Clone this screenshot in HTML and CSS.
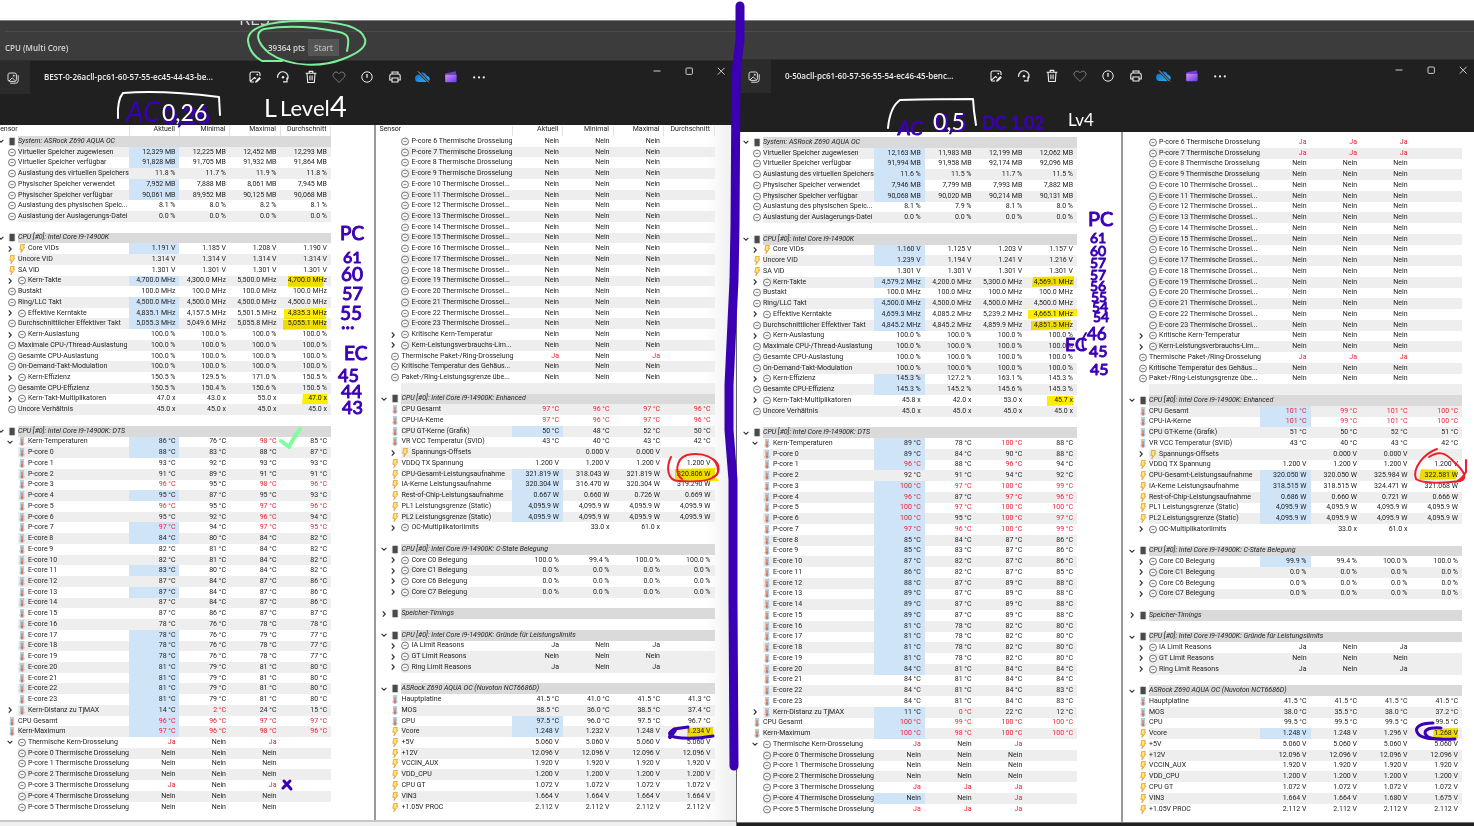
FILE: index.html
```html
<!DOCTYPE html>
<html lang="de">
<head>
<meta charset="utf-8">
<title>Sensorvergleich</title>
<link rel="stylesheet" href="styles.css">
</head>
<body>
<svg class="defs" aria-hidden="true">
  <defs>
    <linearGradient id="clipFill" x1="0" y1="0" x2="1" y2="1"><stop offset="0" stop-color="#e08cf5"/><stop offset="1" stop-color="#5a3df0"/></linearGradient>
    <linearGradient id="cloudFill" x1="0" y1="0" x2="1" y2="1"><stop offset="0" stop-color="#0a66c8"/><stop offset="1" stop-color="#2fb4f5"/></linearGradient>
  </defs>
  <symbol id="i-clock" viewBox="0 0 8 8"><circle cx="4" cy="4" r="3.5" fill="#f4f4f4" stroke="#5a5a5a" stroke-width=".8"/><path d="M2.6 4h2.8" stroke="#777" stroke-width=".8"/></symbol>
  <symbol id="i-bolt" viewBox="0 0 8 10"><path d="M2.6.4h4L5.8 3.6h1.3L2.8 9.7l.7-3.8H1.6z" fill="#ffe96b" stroke="#e08a2c" stroke-width=".8"/></symbol>
  <symbol id="i-temp" viewBox="0 0 8 10"><path d="M2.2.3h3.6v5.4a2.4 2.4 0 1 1-3.6 0z" fill="#b9dcec" stroke="#86b4cc" stroke-width=".6"/><path d="M4 2v5" stroke="#e8663a" stroke-width="1.3"/><circle cx="4" cy="7.4" r="1.3" fill="#e8663a"/></symbol>
  <symbol id="i-chip" viewBox="0 0 8 10"><rect x="1.2" y=".8" width="5.8" height="8.4" fill="#4a4a4a"/><path d="M.9 1.5v7M7.3 1.5v7" stroke="#999" stroke-width=".6" stroke-dasharray="1 1"/></symbol>
  <symbol id="i-open" viewBox="0 0 8 8"><path d="M1.6 2.8 4 5.2l2.4-2.4" fill="none" stroke="#333" stroke-width="1.1"/></symbol>
  <symbol id="i-closed" viewBox="0 0 8 8"><path d="M2.8 1.4 5.2 4 2.8 6.6" fill="none" stroke="#333" stroke-width="1.2"/></symbol>
  <symbol id="i-photo" viewBox="0 0 16 16"><rect x="3" y="3" width="8.4" height="8.4" rx="1.8" fill="none" stroke="#ddd"/><path d="M5.2 13.2h5.5a2.5 2.5 0 0 0 2.5-2.5V5.2M4 11l3.2-3.2L10.6 11" fill="none" stroke="#ddd"/><circle cx="8.8" cy="5.7" r=".9" fill="#ddd"/></symbol>
  <symbol id="i-edit" viewBox="0 0 16 16"><path d="M13 7V5a2 2 0 0 0-2-2H5a2 2 0 0 0-2 2v6a2 2 0 0 0 2 2h2M3.6 12.2 7.5 8.5l1.5 1.2" fill="none" stroke="#eee" stroke-width="1.1"/><path d="m8.5 12 3.8-4 1.6 1.6-3.8 3.7-2 .5z" fill="#eee"/><circle cx="10.3" cy="5.6" r=".9" fill="#eee"/></symbol>
  <symbol id="i-rotate" viewBox="0 0 16 16"><path d="M2.6 8.8A5.3 5.3 0 1 1 11.8 11.6M12 8.6v4.2H8" fill="none" stroke="#eee" stroke-width="1.2"/><circle cx="8" cy="8.3" r="1.2" fill="#eee"/></symbol>
  <symbol id="i-trash" viewBox="0 0 16 16"><path d="M2.6 4.3h10.8M6.2 4V2.4h3.6V4M4 4.5l.7 9h6.6l.7-9M6.9 6.5v4.8M9.1 6.5v4.8" fill="none" stroke="#eee" stroke-width="1.1"/></symbol>
  <symbol id="i-heart" viewBox="0 0 16 16"><path d="M8 13.4 2.9 8.4a3.1 3.1 0 0 1 0-4.4 3.1 3.1 0 0 1 4.4 0l.7.8.7-.8a3.1 3.1 0 0 1 4.4 0 3.1 3.1 0 0 1 0 4.4z" fill="none" stroke="#777"/></symbol>
  <symbol id="i-info" viewBox="0 0 16 16"><circle cx="8" cy="8" r="5.2" fill="none" stroke="#eee"/><path d="M8 5v3.8" stroke="#eee" stroke-width="1.3"/></symbol>
  <symbol id="i-print" viewBox="0 0 16 16"><path d="M5 5V3h6v2M5 11H2.8V7a2 2 0 0 1 2-2h6.4a2 2 0 0 1 2 2v4H11M5 9h6v4H5z" fill="none" stroke="#eee" stroke-width="1.1"/></symbol>
  <symbol id="i-cloud" viewBox="0 0 16 16"><path d="M4 13A3.6 3.6 0 0 1 3.4 5.8a4.5 4.5 0 0 1 8.3 1A3.2 3.2 0 0 1 12.6 13z" fill="url(#cloudFill)"/><path d="m3 2.4 10.8 11" stroke="#202020" stroke-width="2.4"/><path d="m3 2.4 10.8 11" stroke="#aaa"/></symbol>
  <symbol id="i-clip" viewBox="0 0 16 16"><path d="M2.2 4.4 13 2.2v3.1H2.2z" fill="#6c3ce0"/><path d="M2.2 5.6h11.4v6.6a1 1 0 0 1-1 1H3.2a1 1 0 0 1-1-1z" fill="url(#clipFill)"/></symbol>
  <symbol id="i-more" viewBox="0 0 16 16"><circle cx="3.2" cy="8.4" r="1.1" fill="#eee"/><circle cx="8" cy="8.4" r="1.1" fill="#eee"/><circle cx="12.8" cy="8.4" r="1.1" fill="#eee"/></symbol>
  <symbol id="i-min" viewBox="0 0 16 16"><path d="M4.5 8h7" stroke="#ccc"/></symbol>
  <symbol id="i-max" viewBox="0 0 16 16"><rect x="5" y="5" width="6.4" height="6.4" rx="1" fill="none" stroke="#ccc"/></symbol>
  <symbol id="i-close" viewBox="0 0 16 16"><path d="m4.8 4.8 6.8 6.8M11.6 4.8 4.8 11.6" stroke="#ccc"/></symbol>
</svg>

<header class="bench">
  <h1 class="bench-title">RES</h1>
  <div class="bench-row">
    <span class="bench-name">CPU (Multi Core)</span>
    <span class="bench-score">39364 pts</span>
    <button class="bench-start" type="button">Start</button>
  </div>
</header>

<main class="workspace">
  <section class="window window-a">
    <div class="titlebar" data-title="BEST-0-26acll-pc61-60-57-55-ec45-44-43-be..."></div>
    <div class="panes">
      <div class="pane" data-table="a1" data-head="Sensor"></div>
      <div class="pane pane-split" data-table="a2" data-head="Sensor"></div>
    </div>
    <div class="window-foot"></div>
  </section>
  <section class="window window-b">
    <div class="titlebar" data-title="0-50acll-pc61-60-57-56-55-54-ec46-45-benc..."></div>
    <div class="panes">
      <div class="pane" data-table="b1"></div>
      <div class="pane pane-split" data-table="b2"></div>
    </div>
    <div class="window-foot"></div>
  </section>
</main>

<svg class="ink ink-marker" viewBox="0 0 1474 826" aria-hidden="true">
  <path d="M288 276h36v3l-1 8h-35z M284 309l42-1v11h-42z M283 320h42l2 9-44 1z M303 394h24l1 10h-26z M675 469l40-1v8l4 5-40 1-4-3z M687 728l26-1v9l-26 1z M1033 277l41-1v9l-42 2z M1028 310l49-1v7l-49 3z M1031 321l40-1-1 9-39 1z M1047 396h26l1 9-27 1z M1421 469l36 1-1 9-37 1z M1434 729l24-1v10l-25 1z"/>
</svg>
<svg class="ink" viewBox="0 0 1474 826">
  <g class="pen-purple">
    <path class="divider-top" d="M740 6 740 40 737 64 736 80 735 225 734 280 729 385 729 430 733 480 733 600 734 766"/>
    <path d="M283 788q3-3 7-7M284 781l7 8" stroke-width="3"/>
    <path d="M713 736q-22 4-39 1c-6-3-6-4 0-8l14-2" stroke-width="3"/>
    <path d="M675 730l-5 7" stroke-width="4"/>
    <path d="M1433 723c-14 0-18 5-16 9 2 5 8 8 38 7M1441 728c-14-1-18 3-15 7 2 3 8 4 16 4" stroke-width="3"/>
    <path d="M1086 333q-6 8-2 17" stroke-width="2"/>
  </g>
  <path class="pen-green" d="M347 51c3-14 1-17-8-19-24-5-50-7-75-3-9 3-8 13 5 24 22 15 54 14 74 6 16-6 24-13 22-20-4-14-32-18-62-18-36 0-56 7-55 20 1 7 5 15 14 20h20"/>
  <path class="check" d="M281 441l8 6q4-9 11-18"/>
  <g class="pen-white">
    <path d="M118 118q-1-18 5-25 40-3 96 4l1 18"/>
    <path d="M888 128q2-21 12-28 40-1 73-1l1 12 2 14"/>
  </g>
  <g class="pen-red">
    <path d="M671 457c-5 10-4 24 8 24 16 1 38 1 39-10 0-14-15-19-31-16-12 4-12 20-5 24M713 459c8 5 7 16 0 18"/>
    <path d="M1437 449c-14 5-25 20-21 30 6 5 30 4 44 2 10-3 1-13-7-20-8-9-15-10-24-4M1466 460v12q-4 7-10 10"/>
  </g>
  <g class="note-purple">
    <text x="126" y="122" font-size="28" class="slant thin">AC</text>
    <text x="163" y="124" font-size="24">0,26</text>
    <text x="340" y="240" font-size="19">PC</text>
    <text x="343" y="263" font-size="16">61</text>
    <text x="341" y="281" font-size="19">60</text>
    <text x="342" y="300" font-size="18">57</text>
    <text x="340" y="320" font-size="19">55</text>
    <text x="341" y="329" font-size="19">...</text>
    <text x="344" y="360" font-size="19">EC</text>
    <text x="338" y="382" font-size="18">45</text>
    <text x="341" y="398" font-size="18">44</text>
    <text x="342" y="414" font-size="18">43</text>
    <text x="898" y="135" font-size="20" class="slant">AC</text>
    <text x="935" y="131" font-size="23">0,5</text>
    <text x="982" y="129" font-size="17">DC 1,02</text>
    <text x="1088" y="226" font-size="20">PC</text>
    <text x="1090" y="243" font-size="14">61</text>
    <text x="1090" y="256" font-size="14">60</text>
    <text x="1090" y="268" font-size="14">57</text>
    <text x="1090" y="280" font-size="14">57</text>
    <text x="1090" y="291" font-size="14">56</text>
    <text x="1091" y="302" font-size="14">55</text>
    <text x="1092" y="312" font-size="14">54</text>
    <text x="1093" y="322" font-size="14">54</text>
    <text x="1087" y="340" font-size="17">46</text>
    <text x="1089" y="357" font-size="16">45</text>
    <text x="1090" y="375" font-size="16">45</text>
    <text x="1065" y="351" font-size="18">EC</text>
  </g>
  <g class="note-white">
    <text x="162" y="121" font-size="23">0,26</text>
    <text x="264" y="117" font-size="25">L</text>
    <text x="280" y="116" font-size="22">Level</text>
    <text x="330" y="117" font-size="29">4</text>
    <text x="933" y="130" font-size="23">0,5</text>
    <text x="1068" y="126" font-size="17">Lv4</text>
  </g>
</svg>
<script src="sensors.js"></script>
</body>
</html>
```

FILE: styles.css
```css
* { box-sizing: border-box; }

body {
  margin: 0;
  height: 100vh;
  display: flex;
  flex-direction: column;
  overflow: hidden;
  background: #fff;
  color: #1c1c1c;
  font-family: Roboto, "Liberation Sans", Arial, sans-serif;
  position: relative;
}

.defs { position: absolute; width: 0; height: 0; }

button {
  border: 0;
  padding: 0;
  background: none;
  color: inherit;
  font: inherit;
}

/* benchmark strip */
.bench {
  margin-top: 20px;
  height: 40px;
  flex: none;
  overflow: hidden;
  background: #3c3c3c;
  border-top: 1px solid #7d827d;
  color: #d6d6d6;
  font-family: "Open Sans", "Noto Sans", sans-serif;
}
.bench-title {
  margin: -3px 0 0 239px;
  height: 13px;
  line-height: 0;
  font-size: 18px;
  font-weight: 400;
}
.bench-row {
  display: flex;
  align-items: center;
  margin-left: 5px;
  padding: 7px 0 4px;
  border-top: 1px solid #4b4b4b;
  font-size: 8px;
  font-weight: 600;
}
.bench-name { width: 263px; }
.bench-score { width: 40px; }
.bench-start {
  width: 31px;
  height: 17px;
  background: #555;
  color: #b8b8b8;
}

/* viewer windows */
.workspace {
  flex: 1;
  min-height: 0;
  display: grid;
  grid-template-columns: 1fr 1fr;
}
.window {
  display: flex;
  flex-direction: column;
  min-width: 0;
  min-height: 0;
  background: #202020;
}
.window-a { border-right: 1px solid #666; }
.window-b { margin-top: -1px; }

.titlebar {
  height: 65px;
  flex: none;
  display: flex;
  align-items: flex-start;
  padding-right: 4px;
  border-top: 1px solid #2e2e2e;
  color: #eee;
  font-family: "Open Sans", "Noto Sans", sans-serif;
}
.window-b .titlebar {
  height: 73px;
  padding: 0 0 0 4px;
}
.tab {
  width: 30px;
  height: 33px;
  padding: 8px 5px;
  background: #2b2b2b;
}
.tab svg, .tool svg, .winbtn svg { display: block; width: 16px; height: 16px; }
.file {
  width: 217px;
  padding-left: 14px;
  line-height: 32px;
  font-size: 8px;
  font-weight: 600;
  white-space: nowrap;
}
.tools { display: flex; gap: 12px; padding-top: 8px; }
.tool { width: 16px; height: 16px; }
.winbtns { display: flex; gap: 10px; margin-left: auto; padding-top: 2px; }
.winbtn { width: 22px; height: 16px; padding: 0 3px; }

.panes {
  flex: 1;
  min-height: 0;
  display: grid;
  grid-template-columns: 375fr 362fr;
  overflow: hidden;
  background: #fff;
}
.window-b .panes { grid-template-columns: 384fr 353fr; }
.pane { min-height: 0; padding: 1px 43px 7px 0; }
.window-a .pane:first-child { margin-left: -4px; }
.pane-split { border-left: 2px solid #9a9a9a; }
.window-a .pane-split {
  padding: 1px 21px 7px 3px;
  background: linear-gradient(to left, #eee, #fff 30px);
}
.window-b .pane { padding: 5px 44px 7px 4px; }
.window-b .pane-split { padding: 5px 12px 7px 4px; }

.window-foot { height: 6px; flex: none; background: #f0f0f0; border-top: 2px solid #c6c6c6; }
.window-b .window-foot { height: 4px; background: #202020; border-top: 1px solid #777; }

/* sensor tables */
.sensors {
  width: 100%;
  height: 100%;
  table-layout: fixed;
  border-collapse: collapse;
  font-size: 7px;
  line-height: 9px;
  white-space: nowrap;
}
.c-tree { width: 22px; }
.c-name { width: 111px; }
.sensors tr { height: 10px; }
.sensors td, .sensors th { padding: 0 4px 0 0; text-align: right; font-weight: 400; }
.sensors thead th { line-height: 6px; vertical-align: top; border-right: 1px solid #e2e2e2; }
.sensors thead .h-name { padding-left: 0; text-align: left; }
.sensors td.tree { padding: 0; text-align: left; }
.sensors .name { padding: 0; text-align: left; }
.cell { display: flex; align-items: center; height: 9px; }
.tree .cell { padding-left: 1px; }
.tree .cell.top { padding-left: 12px; }
.tree .cell.sub { padding-left: 10px; }
.ico { width: 8px; height: 9px; flex: none; }
.chev { width: 8px; height: 8px; flex: none; margin-right: 3px; }
.name .ico { margin: 0 2px 0 0; }
.stripe td:not(.tree) { background: #eee; }
.group td.name { background: #dadada; font-style: italic; }
.sensors td.hot { background: #d0e4f8; }
.sensors td.alert { color: #ee1c2e; }

/* drawn annotations over both windows */
.ink {
  position: absolute;
  inset: 0;
  width: 100%;
  height: 100%;
  pointer-events: none;
  fill: none;
  stroke-linecap: round;
  stroke-linejoin: round;
}
.ink-marker { mix-blend-mode: multiply; fill: #ffec00; }
.pen-purple { stroke: #3c00b4; }
.divider-top { stroke-width: 9px; }
.pen-green { stroke: #7df09a; stroke-width: 2px; }
.check { stroke: #7dff9d; stroke-width: 4px; }
.pen-white { stroke: #fff; stroke-width: 2px; }
.pen-red { stroke: #e8222c; stroke-width: 2px; }
.note-purple { fill: #3c00b4; stroke: #3c00b4; stroke-width: 1px; font-family: Lato, sans-serif; }
.note-white { fill: #fff; font-family: Lato, sans-serif; }
.slant { font-style: italic; }
.thin { stroke: none; }
```

FILE: sensors.js
```js
/* Row syntax: "<kind> <label>|current|min|max|avg"
   kind: G open group, g closed group (second char: 1 = first row striped)
         c clock, b bolt, t thermometer; then 0 top level, > closed, v open, . leaf
   value prefix: * changed, ! alert */
const drossel = (from, to, values) => {
  const out = [];
  for (let n = from; n <= to; n++) {
    const name = (n < 8 ? 'P' : 'E') + '-core ' + n + ' Thermische ' + (n < 10 ? 'Drosselung' : 'Drossel...');
    out.push('c. ' + name + '|' + ((values && values[n]) || 'Nein|Nein|Nein'));
  }
  return out;
};

const tables = {
  a1: [
    'G1 System: ASRock Z690 AQUA OC',
    'c0 Virtueller Speicher zugewiesen|*12,329 MB|12,225 MB|12,452 MB|12,293 MB',
    'c0 Virtueller Speicher verfügbar|*91,828 MB|91,705 MB|91,932 MB|91,864 MB',
    'c0 Auslastung des virtuellen Speichers|11.8 %|11.7 %|11.9 %|11.8 %',
    'c0 Physischer Speicher verwendet|*7,952 MB|7,888 MB|8,061 MB|7,945 MB',
    'c0 Physischer Speicher verfügbar|*90,061 MB|89,952 MB|90,125 MB|90,068 MB',
    'c0 Auslastung des physischen Speic...|8.1 %|8.0 %|8.2 %|8.1 %',
    'c0 Auslastung der Auslagerungs-Datei|0.0 %|0.0 %|0.0 %|0.0 %',
    '',
    'G0 CPU [#0]: Intel Core i9-14900K',
    'b> Core VIDs|*1.191 V|1.185 V|1.208 V|1.190 V',
    'b0 Uncore VID|1.314 V|1.314 V|1.314 V|1.314 V',
    'b0 SA VID|1.301 V|1.301 V|1.301 V|1.301 V',
    'c> Kern-Takte|*4,700.0 MHz|4,300.0 MHz|5,500.0 MHz|4,700.0 MHz',
    'c0 Bustakt|100.0 MHz|100.0 MHz|100.0 MHz|100.0 MHz',
    'c0 Ring/LLC Takt|*4,500.0 MHz|4,500.0 MHz|4,500.0 MHz|4,500.0 MHz',
    'c> Effektive Kerntakte|*4,835.1 MHz|4,157.5 MHz|5,501.5 MHz|4,835.3 MHz',
    'c0 Durchschnittlicher Effektiver Takt|*5,055.3 MHz|5,049.6 MHz|5,055.8 MHz|5,055.1 MHz',
    'c> Kern-Auslastung|100.0 %|100.0 %|100.0 %|100.0 %',
    'c0 Maximale CPU-/Thread-Auslastung|100.0 %|100.0 %|100.0 %|100.0 %',
    'c0 Gesamte CPU-Auslastung|100.0 %|100.0 %|100.0 %|100.0 %',
    'c0 On-Demand-Takt-Modulation|100.0 %|100.0 %|100.0 %|100.0 %',
    'c> Kern-Effizienz|150.5 %|129.5 %|171.0 %|150.5 %',
    'c0 Gesamte CPU-Effizienz|150.5 %|150.4 %|150.6 %|150.5 %',
    'c> Kern-Takt-Multiplikatoren|47.0 x|43.0 x|55.0 x|47.0 x',
    'c0 Uncore Verhältnis|45.0 x|45.0 x|45.0 x|45.0 x',
    '',
    'G0 CPU [#0]: Intel Core i9-14900K: DTS',
    'tv Kern-Temperaturen|*86 °C|76 °C|!98 °C|85 °C',
    't. P-core 0|*88 °C|83 °C|88 °C|87 °C',
    't. P-core 1|93 °C|92 °C|93 °C|93 °C',
    't. P-core 2|91 °C|89 °C|91 °C|91 °C',
    't. P-core 3|!96 °C|95 °C|!98 °C|!96 °C',
    't. P-core 4|*95 °C|87 °C|95 °C|93 °C',
    't. P-core 5|!96 °C|95 °C|!97 °C|!96 °C',
    't. P-core 6|95 °C|92 °C|!96 °C|94 °C',
    't. P-core 7|*!97 °C|94 °C|!97 °C|!95 °C',
    't. E-core 8|*84 °C|80 °C|84 °C|82 °C',
    't. E-core 9|82 °C|81 °C|84 °C|82 °C',
    't. E-core 10|82 °C|81 °C|84 °C|82 °C',
    't. E-core 11|*83 °C|80 °C|84 °C|82 °C',
    't. E-core 12|87 °C|84 °C|87 °C|86 °C',
    't. E-core 13|*87 °C|84 °C|87 °C|86 °C',
    't. E-core 14|87 °C|84 °C|87 °C|86 °C',
    't. E-core 15|87 °C|86 °C|87 °C|87 °C',
    't. E-core 16|78 °C|76 °C|78 °C|78 °C',
    't. E-core 17|*78 °C|76 °C|79 °C|77 °C',
    't. E-core 18|*78 °C|76 °C|78 °C|77 °C',
    't. E-core 19|*78 °C|76 °C|78 °C|77 °C',
    't. E-core 20|*81 °C|79 °C|81 °C|80 °C',
    't. E-core 21|*81 °C|79 °C|81 °C|80 °C',
    't. E-core 22|*81 °C|79 °C|81 °C|80 °C',
    't. E-core 23|*81 °C|79 °C|81 °C|80 °C',
    't> Kern-Distanz zu TjMAX|*14 °C|!2 °C|24 °C|15 °C',
    't0 CPU Gesamt|*!96 °C|!96 °C|!97 °C|!97 °C',
    't0 Kern-Maximum|*!97 °C|!96 °C|!98 °C|!96 °C',
    'cv Thermische Kern-Drosselung|!Ja|Nein|!Ja',
    ...drossel(0, 5, { 3: '!Ja|Nein|!Ja' })
  ],
  a2: [
    ...drossel(6, 23),
    'c> Kritische Kern-Temperatur|Nein|Nein|Nein',
    'c> Kern-Leistungsverbrauchs-Lim...|Nein|Nein|Nein',
    'c0 Thermische Paket-/Ring-Drosselung|!Ja|Nein|!Ja',
    'c0 Kritische Temperatur des Gehäus...|Nein|Nein|Nein',
    'c0 Paket-/Ring-Leistungsgrenze übe...|Nein|Nein|Nein',
    '#',
    'G1 CPU [#0]: Intel Core i9-14900K: Enhanced',
    't0 CPU Gesamt|!97 °C|!96 °C|!97 °C|!96 °C',
    't0 CPU-IA-Kerne|!97 °C|!96 °C|!97 °C|!96 °C',
    't0 CPU GT-Kerne (Grafik)|*50 °C|48 °C|52 °C|50 °C',
    't0 VR VCC Temperatur (SVID)|43 °C|40 °C|43 °C|42 °C',
    'b> Spannungs-Offsets||0.000 V|0.000 V|',
    'b0 VDDQ TX Spannung|1.200 V|1.200 V|1.200 V|1.200 V',
    'b0 CPU-Gesamt-Leistungsaufnahme|*321.819 W|318.043 W|321.819 W|320.806 W',
    'b0 IA-Kerne Leistungsaufnahme|*320.304 W|316.470 W|320.304 W|319.290 W',
    'b0 Rest-of-Chip-Leistungsaufnahme|*0.667 W|0.660 W|0.726 W|0.669 W',
    'b0 PL1 Leistungsgrenze (Static)|*4,095.9 W|4,095.9 W|4,095.9 W|4,095.9 W',
    'b0 PL2 Leistungsgrenze (Static)|*4,095.9 W|4,095.9 W|4,095.9 W|4,095.9 W',
    'c> OC-Multiplikatorlimits||33.0 x|61.0 x|',
    '',
    'G0 CPU [#0]: Intel Core i9-14900K: C-State Belegung',
    'c> Core C0 Belegung|100.0 %|99.4 %|100.0 %|100.0 %',
    'c> Core C1 Belegung|0.0 %|0.0 %|0.0 %|0.0 %',
    'c> Core C6 Belegung|0.0 %|0.0 %|0.0 %|0.0 %',
    'c> Core C7 Belegung|0.0 %|0.0 %|0.0 %|0.0 %',
    '',
    'g0 Speicher-Timings',
    '',
    'G0 CPU [#0]: Intel Core i9-14900K: Gründe für Leistungslimits',
    'c> IA Limit Reasons|Ja|Nein|Ja',
    'c> GT Limit Reasons|Nein|Nein|Nein',
    '#c> Ring Limit Reasons|Ja|Nein|Ja',
    '',
    'G0 ASRock Z690 AQUA OC (Nuvoton NCT6686D)',
    't0 Hauptplatine|41.5 °C|41.0 °C|41.5 °C|41.3 °C',
    't0 MOS|38.5 °C|36.0 °C|38.5 °C|37.4 °C',
    't0 CPU|*97.5 °C|96.0 °C|97.5 °C|96.7 °C',
    'b0 Vcore|*1.248 V|1.232 V|1.248 V|1.234 V',
    'b0 +5V|5.060 V|5.060 V|5.060 V|5.060 V',
    'b0 +12V|12.096 V|12.096 V|12.096 V|12.096 V',
    'b0 VCCIN_AUX|1.920 V|1.920 V|1.920 V|1.920 V',
    'b0 VDD_CPU|1.200 V|1.200 V|1.200 V|1.200 V',
    'b0 CPU GT|1.072 V|1.072 V|1.072 V|1.072 V',
    'b0 VIN3|1.664 V|1.664 V|1.664 V|1.664 V',
    'b0 +1.05V PROC|2.112 V|2.112 V|2.112 V|2.112 V'
  ],
  b1: [
    'G1 System: ASRock Z690 AQUA OC',
    'c0 Virtueller Speicher zugewiesen|*12,163 MB|11,983 MB|12,199 MB|12,062 MB',
    'c0 Virtueller Speicher verfügbar|*91,994 MB|91,958 MB|92,174 MB|92,096 MB',
    'c0 Auslastung des virtuellen Speichers|*11.6 %|11.5 %|11.7 %|11.5 %',
    'c0 Physischer Speicher verwendet|*7,946 MB|7,799 MB|7,993 MB|7,882 MB',
    'c0 Physischer Speicher verfügbar|*90,068 MB|90,020 MB|90,214 MB|90,131 MB',
    'c0 Auslastung des physischen Speic...|8.1 %|7.9 %|8.1 %|8.0 %',
    'c0 Auslastung der Auslagerungs-Datei|0.0 %|0.0 %|0.0 %|0.0 %',
    '',
    'G0 CPU [#0]: Intel Core i9-14900K',
    'b> Core VIDs|*1.160 V|1.125 V|1.203 V|1.157 V',
    'b0 Uncore VID|*1.239 V|1.194 V|1.241 V|1.216 V',
    'b0 SA VID|1.301 V|1.301 V|1.301 V|1.301 V',
    'c> Kern-Takte|*4,579.2 MHz|4,200.0 MHz|5,300.0 MHz|4,569.1 MHz',
    'c0 Bustakt|100.0 MHz|100.0 MHz|100.0 MHz|100.0 MHz',
    'c0 Ring/LLC Takt|*4,500.0 MHz|4,500.0 MHz|4,500.0 MHz|4,500.0 MHz',
    'c> Effektive Kerntakte|*4,659.3 MHz|4,085.2 MHz|5,239.2 MHz|4,665.1 MHz',
    'c0 Durchschnittlicher Effektiver Takt|*4,845.2 MHz|4,845.2 MHz|4,859.9 MHz|4,851.5 MHz',
    'c> Kern-Auslastung|100.0 %|100.0 %|100.0 %|100.0 %',
    'c0 Maximale CPU-/Thread-Auslastung|100.0 %|100.0 %|100.0 %|100.0 %',
    'c0 Gesamte CPU-Auslastung|100.0 %|100.0 %|100.0 %|100.0 %',
    'c0 On-Demand-Takt-Modulation|100.0 %|100.0 %|100.0 %|100.0 %',
    'c> Kern-Effizienz|*145.3 %|127.2 %|163.1 %|145.3 %',
    'c0 Gesamte CPU-Effizienz|*145.3 %|145.2 %|145.6 %|145.3 %',
    'c> Kern-Takt-Multiplikatoren|45.8 x|42.0 x|53.0 x|45.7 x',
    'c0 Uncore Verhältnis|45.0 x|45.0 x|45.0 x|45.0 x',
    '',
    'G0 CPU [#0]: Intel Core i9-14900K: DTS',
    'tv Kern-Temperaturen|*89 °C|78 °C|!100 °C|88 °C',
    't. P-core 0|*89 °C|84 °C|90 °C|88 °C',
    't. P-core 1|*!96 °C|88 °C|!96 °C|94 °C',
    't. P-core 2|92 °C|91 °C|94 °C|92 °C',
    't. P-core 3|*!100 °C|!97 °C|!100 °C|!99 °C',
    't. P-core 4|*!96 °C|87 °C|!97 °C|!96 °C',
    't. P-core 5|*!100 °C|!97 °C|!100 °C|!100 °C',
    't. P-core 6|*!100 °C|95 °C|!100 °C|!97 °C',
    't. P-core 7|*!97 °C|!96 °C|!100 °C|!99 °C',
    't. E-core 8|*85 °C|84 °C|87 °C|86 °C',
    't. E-core 9|*85 °C|83 °C|87 °C|86 °C',
    't. E-core 10|*87 °C|82 °C|87 °C|86 °C',
    't. E-core 11|*86 °C|82 °C|87 °C|85 °C',
    't. E-core 12|*88 °C|87 °C|89 °C|88 °C',
    't. E-core 13|*89 °C|87 °C|89 °C|88 °C',
    't. E-core 14|*89 °C|87 °C|89 °C|88 °C',
    't. E-core 15|*89 °C|87 °C|89 °C|88 °C',
    't. E-core 16|*81 °C|78 °C|82 °C|80 °C',
    't. E-core 17|*81 °C|78 °C|82 °C|80 °C',
    't. E-core 18|*81 °C|78 °C|82 °C|80 °C',
    't. E-core 19|*81 °C|78 °C|82 °C|80 °C',
    't. E-core 20|*84 °C|81 °C|84 °C|84 °C',
    't. E-core 21|84 °C|81 °C|84 °C|84 °C',
    't. E-core 22|84 °C|81 °C|84 °C|83 °C',
    't. E-core 23|84 °C|81 °C|84 °C|83 °C',
    't> Kern-Distanz zu TjMAX|*11 °C|!0 °C|22 °C|12 °C',
    't0 CPU Gesamt|*!100 °C|!99 °C|!100 °C|!100 °C',
    't0 Kern-Maximum|*!100 °C|!98 °C|!100 °C|!100 °C',
    'cv Thermische Kern-Drosselung|!Ja|Nein|!Ja',
    ...drossel(0, 5, { 3: '!Ja|!Ja|!Ja', 4: '*Nein|Nein|!Ja', 5: '!Ja|!Ja|!Ja' })
  ],
  b2: [
    ...drossel(6, 23, { 6: '!Ja|!Ja|!Ja', 7: '!Ja|!Ja|!Ja' }),
    'c> Kritische Kern-Temperatur|Nein|Nein|Nein',
    'c> Kern-Leistungsverbrauchs-Lim...|Nein|Nein|Nein',
    'c0 Thermische Paket-/Ring-Drosselung|!Ja|!Ja|!Ja',
    'c0 Kritische Temperatur des Gehäus...|Nein|Nein|Nein',
    'c0 Paket-/Ring-Leistungsgrenze übe...|Nein|Nein|Nein',
    '#',
    'G1 CPU [#0]: Intel Core i9-14900K: Enhanced',
    't0 CPU Gesamt|*!101 °C|!99 °C|!101 °C|!100 °C',
    't0 CPU-IA-Kerne|*!101 °C|!99 °C|!101 °C|!100 °C',
    't0 CPU GT-Kerne (Grafik)|51 °C|50 °C|52 °C|51 °C',
    't0 VR VCC Temperatur (SVID)|43 °C|40 °C|43 °C|42 °C',
    'b> Spannungs-Offsets||0.000 V|0.000 V|',
    'b0 VDDQ TX Spannung|1.200 V|1.200 V|1.200 V|1.200 V',
    'b0 CPU-Gesamt-Leistungsaufnahme|*320.050 W|320.050 W|325.984 W|322.581 W',
    'b0 IA-Kerne Leistungsaufnahme|*318.515 W|318.515 W|324.471 W|321.068 W',
    'b0 Rest-of-Chip-Leistungsaufnahme|*0.686 W|0.660 W|0.721 W|0.666 W',
    'b0 PL1 Leistungsgrenze (Static)|*4,095.9 W|4,095.9 W|4,095.9 W|4,095.9 W',
    'b0 PL2 Leistungsgrenze (Static)|*4,095.9 W|4,095.9 W|4,095.9 W|4,095.9 W',
    'c> OC-Multiplikatorlimits||33.0 x|61.0 x|',
    '',
    'G0 CPU [#0]: Intel Core i9-14900K: C-State Belegung',
    'c> Core C0 Belegung|*99.9 %|99.4 %|100.0 %|100.0 %',
    'c> Core C1 Belegung|0.0 %|0.0 %|0.0 %|0.0 %',
    'c> Core C6 Belegung|0.0 %|0.0 %|0.0 %|0.0 %',
    'c> Core C7 Belegung|0.0 %|0.0 %|0.0 %|0.0 %',
    '',
    'g0 Speicher-Timings',
    '',
    'G0 CPU [#0]: Intel Core i9-14900K: Gründe für Leistungslimits',
    'c> IA Limit Reasons|Ja|Nein|Ja',
    'c> GT Limit Reasons|Nein|Nein|Nein',
    '#c> Ring Limit Reasons|Ja|Nein|Ja',
    '',
    'G0 ASRock Z690 AQUA OC (Nuvoton NCT6686D)',
    't0 Hauptplatine|41.5 °C|41.5 °C|41.5 °C|41.5 °C',
    't0 MOS|38.0 °C|35.5 °C|38.0 °C|37.2 °C',
    't0 CPU|99.5 °C|99.5 °C|99.5 °C|99.5 °C',
    'b0 Vcore|*1.248 V|1.248 V|1.296 V|1.268 V',
    'b0 +5V|5.060 V|5.060 V|5.060 V|5.060 V',
    'b0 +12V|12.096 V|12.096 V|12.096 V|12.096 V',
    'b0 VCCIN_AUX|1.920 V|1.920 V|1.920 V|1.920 V',
    'b0 VDD_CPU|1.200 V|1.200 V|1.200 V|1.200 V',
    'b0 CPU GT|1.072 V|1.072 V|1.072 V|1.072 V',
    'b0 VIN3|1.664 V|1.664 V|1.680 V|1.675 V',
    'b0 +1.05V PROC|2.112 V|2.112 V|2.112 V|2.112 V'
  ]
};

const icons = { c: 'clock', b: 'bolt', t: 'temp' };
const svg = (id, cls) => `<svg class="${cls}" aria-hidden="true"><use href="#i-${id}"/></svg>`;

function renderRow(line, state) {
  let forced = false;
  if (line[0] === '#') { forced = true; line = line.slice(1); }
  if (!line) {
    return `<tr class="${forced ? 'stripe' : ''}"><td class="tree"></td><td class="name"></td><td></td><td></td><td></td><td></td></tr>`;
  }
  const kind = line.slice(0, 2);
  const [label, ...values] = line.slice(3).split('|');
  if (kind[0] === 'G' || kind[0] === 'g') {
    state.stripe = kind[1] === '1';
    const chev = svg(kind[0] === 'G' ? 'open' : 'closed', 'chev');
    return `<tr class="group"><td class="tree"><div class="cell">${chev}${svg('chip', 'ico')}</div></td><td class="name" colspan="5"><div class="cell">${label}</div></td></tr>`;
  }
  const striped = forced || state.stripe;
  state.stripe = !state.stripe;
  const icon = svg(icons[kind[0]], 'ico');
  const top = kind[1] === '0';
  let tree = '';
  if (top) tree = `<div class="cell top">${icon}</div>`;
  else if (kind[1] !== '.') tree = `<div class="cell sub">${svg(kind[1] === 'v' ? 'open' : 'closed', 'chev')}</div>`;
  const cells = [0, 1, 2, 3].map(i => {
    let v = values[i] || '';
    const cls = [];
    if (v[0] === '*') { cls.push('hot'); v = v.slice(1); }
    if (v[0] === '!') { cls.push('alert'); v = v.slice(1); }
    return `<td class="${cls.join(' ')}">${v}</td>`;
  }).join('');
  return `<tr class="${striped ? 'stripe' : ''}"><td class="tree">${tree}</td><td class="name"><div class="cell">${top ? '' : icon}${label}</div></td>${cells}</tr>`;
}

document.querySelectorAll('[data-table]').forEach(pane => {
  const state = { stripe: false };
  const head = pane.dataset.head
    ? `<thead><tr><th class="h-name" colspan="2">${pane.dataset.head}</th><th>Aktuell</th><th>Minimal</th><th>Maximal</th><th>Durchschnitt</th></tr></thead>`
    : '';
  pane.innerHTML = `<table class="sensors"><colgroup><col class="c-tree"><col class="c-name"><col><col><col><col></colgroup>${head}<tbody>${tables[pane.dataset.table].map(r => renderRow(r, state)).join('')}</tbody></table>`;
});

const tools = [['edit', 'Bearbeiten'], ['rotate', 'Drehen'], ['trash', 'Löschen'], ['heart', 'Favorit'], ['info', 'Info'], ['print', 'Drucken'], ['cloud', 'OneDrive'], ['clip', 'Clipchamp'], ['more', 'Mehr']];
const frame = [['min', 'Minimieren'], ['max', 'Maximieren'], ['close', 'Schließen']];
const button = cls => ([id, label]) => `<button type="button" class="${cls}" aria-label="${label}">${svg(id, '')}</button>`;
document.querySelectorAll('.titlebar').forEach(bar => {
  bar.innerHTML = `<button type="button" class="tab" aria-label="Galerie">${svg('photo', '')}</button><span class="file">${bar.dataset.title}</span><div class="tools">${tools.map(button('tool')).join('')}</div><div class="winbtns">${frame.map(button('winbtn')).join('')}</div>`;
});
```
